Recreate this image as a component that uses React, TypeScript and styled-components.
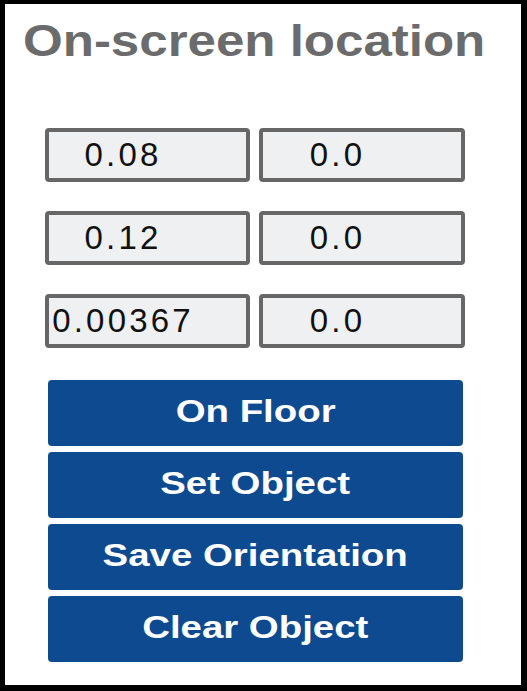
import React from "react";
import styled, { createGlobalStyle } from "styled-components";

const Global = createGlobalStyle`
  html, body { margin: 0; padding: 0; background: #ffffff; }
  * { box-sizing: border-box; }
`;

const Frame = styled.div`
  width: 527px;
  height: 691px;
  background: #ffffff;
  border-style: solid;
  border-color: #000000;
  border-width: 4px 6px 6px 5px;
  padding: 0 0 0 40px;
  font-family: "Liberation Sans", Arial, sans-serif;
  display: flex;
  flex-direction: column;
`;

const Title = styled.h2`
  margin: 15px 0 0 -22px;
  font-size: 44px;
  line-height: 44px;
  font-weight: 700;
  color: #6b6b6b;
  white-space: nowrap;
`;

const Stretch = styled.span`
  display: inline-block;
  transform: scaleX(1.16);
  transform-origin: left center;
`;

const Fields = styled.div`
  margin-top: 65px;
  display: grid;
  grid-template-columns: 205px 206px;
  column-gap: 9px;
  row-gap: 29px;
`;

const Field = styled.input`
  width: 100%;
  height: 54px;
  margin: 0;
  border: 4px solid #676767;
  border-radius: 4px;
  background: #eef0f1;
  padding: 0 49px 0 0;
  text-align: center;
  font-family: "Liberation Sans", Arial, sans-serif;
  font-size: 33px;
  letter-spacing: 3.2px;
  color: #111111;
  outline: none;
`;

const Buttons = styled.div`
  margin: 32px 0 0 3px;
  width: 415px;
  display: flex;
  flex-direction: column;
  gap: 6px;
`;

const Button = styled.button`
  height: 66px;
  width: 100%;
  border: none;
  border-radius: 4px;
  background: #0e4a90;
  color: #ffffff;
  font-family: "Liberation Sans", Arial, sans-serif;
  font-size: 32px;
  font-weight: 700;
  padding: 0 0 3px 0;
  display: flex;
  align-items: center;
  justify-content: center;
  cursor: pointer;
`;

const ButtonLabel = styled.span`
  display: inline-block;
  transform: scaleX(1.2);
`;

const rows = [
  ["0.08", "0.0"],
  ["0.12", "0.0"],
  ["0.00367", "0.0"],
];

const actions = ["On Floor", "Set Object", "Save Orientation", "Clear Object"];

export default function App() {
  return (
    <>
      <Global />
      <Frame>
        <Title>
          <Stretch>On-screen location</Stretch>
        </Title>
        <Fields>
          {rows.flatMap((r, i) =>
            r.map((v, j) => <Field key={`${i}-${j}`} defaultValue={v} readOnly />)
          )}
        </Fields>
        <Buttons>
          {actions.map((a) => (
            <Button key={a}>
              <ButtonLabel>{a}</ButtonLabel>
            </Button>
          ))}
        </Buttons>
      </Frame>
    </>
  );
}
